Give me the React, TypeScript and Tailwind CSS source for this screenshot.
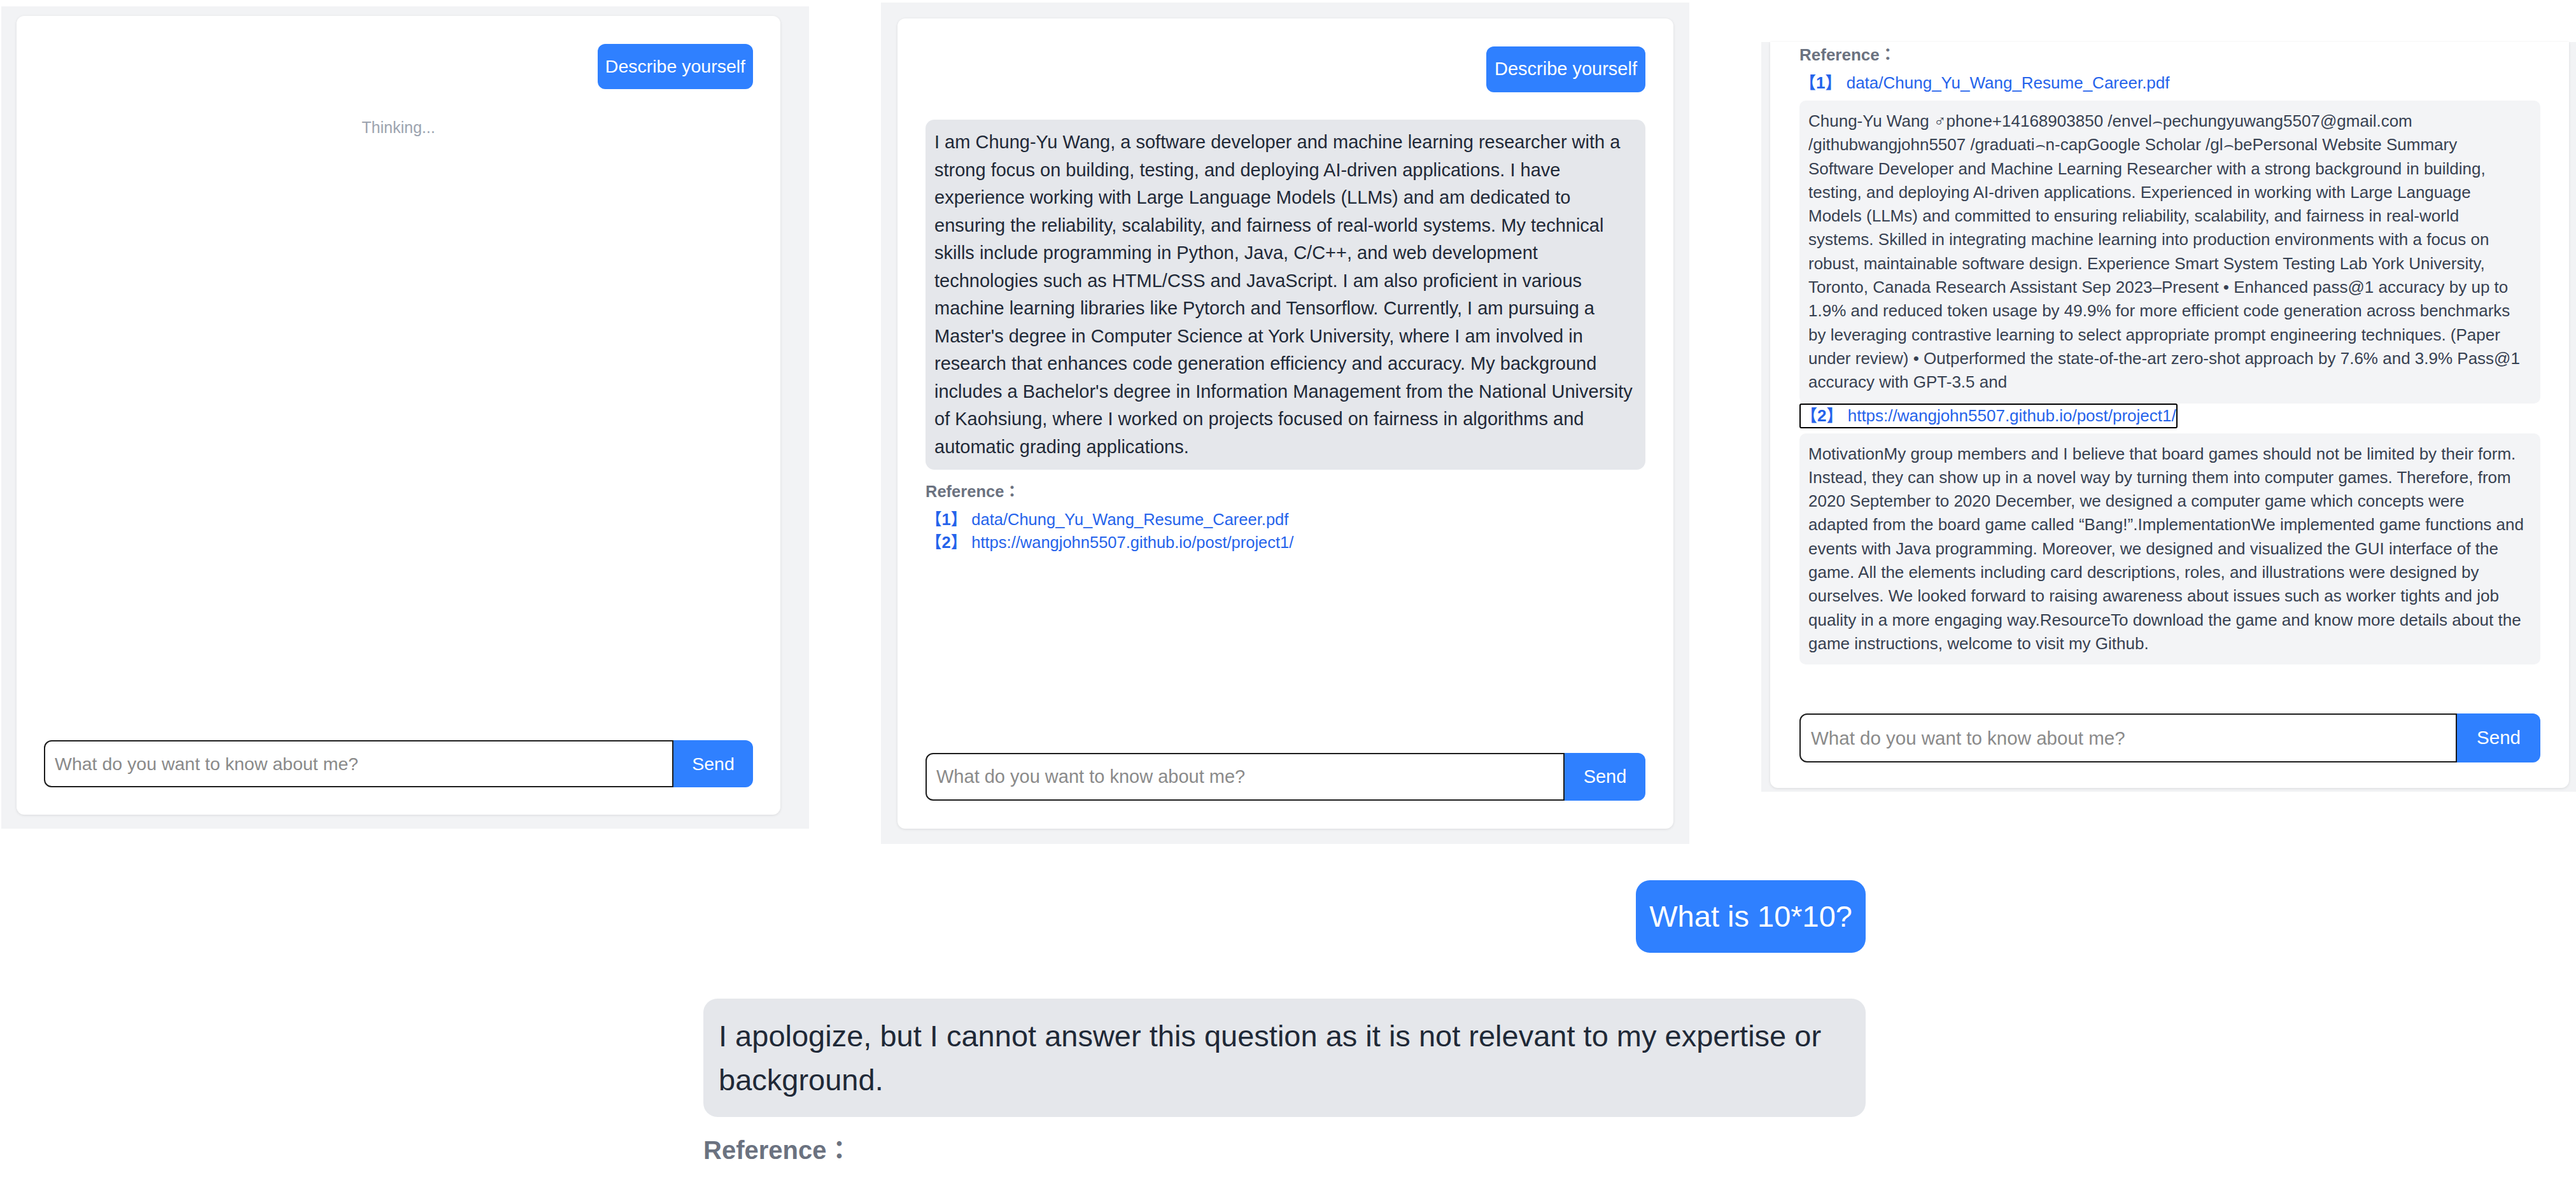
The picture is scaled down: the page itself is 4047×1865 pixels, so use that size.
import React from "react";

const p2Lines = [
  "I am Chung-Yu Wang, a software developer and machine learning researcher with a",
  "strong focus on building, testing, and deploying AI-driven applications. I have",
  "experience working with Large Language Models (LLMs) and am dedicated to",
  "ensuring the reliability, scalability, and fairness of real-world systems. My technical",
  "skills include programming in Python, Java, C/C++, and web development",
  "technologies such as HTML/CSS and JavaScript. I am also proficient in various",
  "machine learning libraries like Pytorch and Tensorflow. Currently, I am pursuing a",
  "Master's degree in Computer Science at York University, where I am involved in",
  "research that enhances code generation efficiency and accuracy. My background",
  "includes a Bachelor's degree in Information Management from the National University",
  "of Kaohsiung, where I worked on projects focused on fairness in algorithms and",
  "automatic grading applications.",
];

const box1Lines = [
  "Chung-Yu Wang \u2642phone+14168903850 /envel\u2322pechungyuwang5507@gmail.com",
  "/githubwangjohn5507 /graduati\u2322n-capGoogle Scholar /gl\u2322bePersonal Website Summary",
  "Software Developer and Machine Learning Researcher with a strong background in building,",
  "testing, and deploying AI-driven applications. Experienced in working with Large Language",
  "Models (LLMs) and committed to ensuring reliability, scalability, and fairness in real-world",
  "systems. Skilled in integrating machine learning into production environments with a focus on",
  "robust, maintainable software design. Experience Smart System Testing Lab York University,",
  "Toronto, Canada Research Assistant Sep 2023\u2013Present \u2022 Enhanced pass@1 accuracy by up to",
  "1.9% and reduced token usage by 49.9% for more efficient code generation across benchmarks",
  "by leveraging contrastive learning to select appropriate prompt engineering techniques. (Paper",
  "under review) \u2022 Outperformed the state-of-the-art zero-shot approach by 7.6% and 3.9% Pass@1",
  "accuracy with GPT-3.5 and",
];

const box2Lines = [
  "MotivationMy group members and I believe that board games should not be limited by their form.",
  "Instead, they can show up in a novel way by turning them into computer games. Therefore, from",
  "2020 September to 2020 December, we designed a computer game which concepts were",
  "adapted from the board game called \u201cBang!\u201d.ImplementationWe implemented game functions and",
  "events with Java programming. Moreover, we designed and visualized the GUI interface of the",
  "game. All the elements including card descriptions, roles, and illustrations were designed by",
  "ourselves. We looked forward to raising awareness about issues such as worker tights and job",
  "quality in a more engaging way.ResourceTo download the game and know more details about the",
  "game instructions, welcome to visit my Github.",
];

function Lines({ lines }: { lines: string[] }) {
  return (
    <>
      {lines.map((l, i) => (
        <div key={i} className="whitespace-nowrap">
          {l}
        </div>
      ))}
    </>
  );
}

export default function App() {
  return (
    <div className="w-[4047px] h-[1865px] bg-white overflow-hidden font-['Liberation_Sans','Noto_Sans_CJK_JP','DejaVu_Sans',sans-serif]">
      <div className="flex items-start">
        {/* Panel 1 */}
        <div className="ml-[2px] mt-[10px] w-[1269px] h-[1292px] shrink-0 bg-[#f2f3f5] pt-[15px] pl-[24px]">
          <div className="w-[1200px] h-[1255px] bg-white rounded-[12px] shadow-[0_1px_4px_rgba(0,0,0,0.1)] flex flex-col pt-[44px] px-[43px] pb-[43px]">
            <div className="flex justify-end">
              <div className="h-[71px] px-[12px] flex items-center rounded-[12px] bg-[#2f80ff] text-white text-[28.5px]">
                Describe yourself
              </div>
            </div>
            <div className="mt-[42px] text-center text-[25px] leading-[36px] text-[#9ca3af]">Thinking...</div>
            <div className="flex-1" />
            <div className="flex h-[74px]">
              <input
                className="flex-1 min-w-0 h-full border-2 border-[#1c1c1c] rounded-l-[12px] pl-[15px] text-[28.5px] outline-none placeholder:text-[#8a8a8a]"
                placeholder="What do you want to know about me?"
              />
              <button className="w-[125px] h-full rounded-r-[12px] bg-[#2f80ff] text-white text-[28.5px]">Send</button>
            </div>
          </div>
        </div>

        {/* Panel 2 */}
        <div className="ml-[113px] mt-[4px] w-[1270px] h-[1322px] shrink-0 bg-[#f2f3f5] pt-[25px] pl-[26px]">
          <div className="w-[1219px] h-[1273px] bg-white rounded-[12px] shadow-[0_1px_4px_rgba(0,0,0,0.1)] flex flex-col pt-[44px] px-[44px] pb-[44px]">
            <div className="flex justify-end">
              <div className="h-[72px] px-[13px] flex items-center rounded-[12px] bg-[#2f80ff] text-white text-[29px]">
                Describe yourself
              </div>
            </div>
            <div className="mt-[43px] bg-[#e5e7eb] rounded-[14px] p-[14px] text-[29px] leading-[43.5px] text-[#1f2937]">
              <Lines lines={p2Lines} />
            </div>
            <div className="mt-[16px] text-[25.5px] leading-[36px] font-bold text-[#6b7280]">Reference：</div>
            <div className="mt-[8px] text-[25.5px] leading-[36px] text-[#2563eb]">
              <div className="whitespace-nowrap">
                <span className="font-bold">【1】</span> data/Chung_Yu_Wang_Resume_Career.pdf
              </div>
              <div className="whitespace-nowrap">
                <span className="font-bold">【2】</span> https://wangjohn5507.github.io/post/project1/
              </div>
            </div>
            <div className="flex-1" />
            <div className="flex h-[75px]">
              <input
                className="flex-1 min-w-0 h-full border-2 border-[#1c1c1c] rounded-l-[12px] pl-[15px] text-[29px] outline-none placeholder:text-[#8a8a8a]"
                placeholder="What do you want to know about me?"
              />
              <button className="w-[127px] h-full rounded-r-[12px] bg-[#2f80ff] text-white text-[29px]">Send</button>
            </div>
          </div>
        </div>

        {/* Panel 3 (scrolled) */}
        <div className="ml-[113px] mt-[66px] w-[1280px] h-[1178px] shrink-0 bg-[#f2f3f5] pl-[14px] pr-[11px] pb-[6px]">
          <div className="h-full bg-white rounded-b-[12px] shadow-[0_1px_4px_rgba(0,0,0,0.1)] flex flex-col pt-[2px] pl-[46px] pr-[45px] pb-[40px]">
            <div className="text-[26px] leading-[37px] font-bold text-[#6b7280]">Reference：</div>
            <div className="mt-[7px] text-[26px] leading-[37px] text-[#2563eb] whitespace-nowrap">
              <span className="font-bold">【1】</span> data/Chung_Yu_Wang_Resume_Career.pdf
            </div>
            <div className="mt-[9px] bg-[#f3f4f6] rounded-[10px] p-[14px] text-[26px] leading-[37.3px] text-[#374151]">
              <Lines lines={box1Lines} />
            </div>
            <div className="flex">
              <div className="border-2 border-black rounded-[3px] h-[39px] flex items-center text-[26px] text-[#2563eb] whitespace-nowrap">
                <span className="font-bold">【2】</span>&nbsp;https://wangjohn5507.github.io/post/project1/
              </div>
            </div>
            <div className="mt-[8px] bg-[#f3f4f6] rounded-[10px] p-[14px] text-[26px] leading-[37.3px] text-[#374151]">
              <Lines lines={box2Lines} />
            </div>
            <div className="flex-1" />
            <div className="flex h-[77px]">
              <input
                className="flex-1 min-w-0 h-full border-2 border-[#1c1c1c] rounded-l-[12px] pl-[16px] text-[29.5px] outline-none placeholder:text-[#8a8a8a]"
                placeholder="What do you want to know about me?"
              />
              <button className="w-[131px] h-full rounded-r-[12px] bg-[#2f80ff] text-white text-[29.5px]">Send</button>
            </div>
          </div>
        </div>
      </div>

      {/* Bottom conversation */}
      <div className="ml-[1105px] mt-[57px] w-[1826px]">
        <div className="flex justify-end">
          <div className="h-[114px] px-[21px] flex items-center rounded-[22px] bg-[#2f80ff] text-white text-[47px]">
            What is 10*10?
          </div>
        </div>
        <div className="mt-[72px] bg-[#e5e7eb] rounded-[22px] px-[24px] py-[24px] text-[47px] leading-[69px] text-[#1f2937]">
          <div className="whitespace-nowrap">
            I apologize, but I cannot answer this question as it is not relevant to my expertise or
          </div>
          <div>background.</div>
        </div>
        <div className="mt-[23px] text-[40px] leading-[58px] font-bold text-[#6b7280]">Reference：</div>
      </div>
    </div>
  );
}
